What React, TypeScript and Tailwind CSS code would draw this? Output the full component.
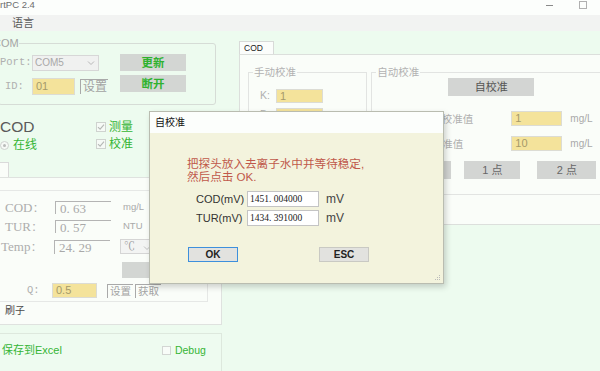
import React from "react";

const CJK = "font-['Liberation_Sans','Noto_Sans_CJK_SC',sans-serif]";
const SERIF = "font-['Liberation_Serif','Noto_Serif_CJK_SC','Noto_Sans_CJK_SC',serif]";
const MONO = "font-['Liberation_Mono',monospace]";

function Check({ label }: { label: string }) {
  return (
    <div className="flex h-[17px] items-center">
      <div className="flex h-[10px] w-[10px] items-center justify-center border border-[#cfd3cf] bg-[#f6faf6]">
        <svg width="8" height="8" viewBox="0 0 8 8">
          <path d="M1 4.2 L3.1 6.2 L7 1.6" fill="none" stroke="#b5b8b5" strokeWidth="1.1" />
        </svg>
      </div>
      <span className="ml-[3px] text-[12px] leading-[14px] text-[#35b535]">{label}</span>
    </div>
  );
}

function SunkenInput({ value, w }: { value: string; w: string }) {
  return (
    <div className={`flex h-[13px] items-center border-l border-t border-[#b4b4b4] pl-[4px] ${w}`}>
      <span className={`${SERIF} text-[13px] leading-[13px] text-[#a9a9a9]`}>{value}</span>
    </div>
  );
}

function Yellow({ value, w, h }: { value: string; w: string; h: string }) {
  return (
    <div className={`flex items-center border border-[#dcdcd4] bg-[#f4e39b] pl-[3px] ${w} ${h}`}>
      <span className="text-[11px] leading-[11px] text-[#a59a6a]">{value}</span>
    </div>
  );
}

function EdgeLabel({ text, w }: { text: string; w: string }) {
  return (
    <div className={`flex h-[14px] shrink-0 items-center whitespace-nowrap border-l border-t border-[#a9a9a9] pl-[2px] ${w}`}>
      <span className="text-[10.5px] leading-[11px] text-[#a3a3a3]">{text}</span>
    </div>
  );
}

export default function App() {
  return (
    <div className={`relative h-[371px] w-[600px] overflow-hidden bg-[#edfbef] ${CJK}`}>
      {/* title bar */}
      <div className="relative flex h-[15px] items-start bg-[#fcfefc]">
        <span className="-mt-px text-[9.5px] leading-[11px] text-[#6d6d6d]">rtPC 2.4</span>
        <div className="absolute left-[546px] top-[5px] h-px w-[7px] bg-[#8a8a8a]" />
        <div className="absolute left-[579px] top-px h-[8px] w-[8px] border border-[#b0b0b0]" />
      </div>
      {/* menu bar */}
      <div className="flex h-[16px] items-center bg-[#f2f3f2] pl-[12px]">
        <span className="text-[11px] leading-[12px] text-[#5a5a5a]">语言</span>
      </div>

      <div className="flex">
        {/* left column */}
        <div className="flex w-[222px] flex-col">
          {/* COM group */}
          <div className="relative -ml-[2px] mt-[12px] h-[62px] w-[218px] rounded-[3px] border border-[#d6dcd6]">
            <span className="absolute -top-[7px] left-[-6px] bg-[#edfbef] text-[11px] leading-[12px] text-[#a5a5a5]">COM</span>
            <div className="ml-[1px] mt-[10px] flex">
              <div className="flex w-[108px] flex-col">
                <div className="flex h-[17px] items-center">
                  <span className={`${MONO} w-[32px] text-[10.5px] text-[#b0b0b0]`}>Port:</span>
                  <div className="relative flex h-[16px] w-[67px] items-center border border-[#d7d7d7] bg-[#f0f1f0] pl-[2px]">
                    <span className="text-[10px] leading-[10px] text-[#a8a8a8]">COM5</span>
                    <svg className="absolute right-[3px] top-[4px]" width="8" height="6" viewBox="0 0 8 6">
                      <path d="M1 1.5 L4 4.5 L7 1.5" fill="none" stroke="#b8b8b8" strokeWidth="1" />
                    </svg>
                  </div>
                </div>
                <div className="mt-[7px] flex h-[17px] items-center">
                  <span className={`${MONO} w-[32px] pl-[5px] text-[10.5px] text-[#b0b0b0]`}>ID:</span>
                  <Yellow value="01" w="w-[43px]" h="h-[17px]" />
                  <div className="ml-[5px] flex h-[15px] w-[28px] items-center whitespace-nowrap border-l border-t border-[#a9a9a9] pl-[2px]">
                    <span className="text-[12px] leading-[12px] text-[#a3a3a3]">设置</span>
                  </div>
                </div>
              </div>
              <div className="ml-[12px] flex flex-col gap-[4px]">
                <div className="flex h-[17px] w-[66px] items-center justify-center bg-[#d3d6d3]">
                  <span className="text-[11.5px] font-bold leading-[12px] text-[#2fb22f]">更新</span>
                </div>
                <div className="flex h-[17px] w-[66px] items-center justify-center bg-[#d3d6d3]">
                  <span className="text-[11.5px] font-bold leading-[12px] text-[#2fb22f]">断开</span>
                </div>
              </div>
            </div>
          </div>

          {/* COD status area */}
          <div className="flex h-[55px] pt-[13px]">
            <div className="flex w-[96px] flex-col">
              <span className="text-[15.5px] leading-[18px] text-[#5a5a5a]">COD</span>
              <div className="mt-[2px] flex h-[14px] items-center">
                <div className="flex h-[9px] w-[9px] items-center justify-center rounded-full border border-[#cfd3cf] bg-[#f6faf6]">
                  <div className="h-[3px] w-[3px] rounded-full bg-[#b9bcb9]" />
                </div>
                <span className="ml-[4px] text-[12px] leading-[14px] text-[#35b535]">在线</span>
              </div>
            </div>
            <div className="flex flex-col">
              <Check label="测量" />
              <Check label="校准" />
            </div>
          </div>

          {/* tab strip */}
          <div className="flex h-[17px] items-end">
            <div className="h-[15px] w-[9px] border-r border-t border-[#dadada] bg-[#fafdf9]" />
          </div>

          {/* data panel */}
          <div className="flex h-[148px] w-[222px] flex-col border-b border-r border-t border-[#dfe2df] bg-[#fafdf9]">
            <div className="mt-[12px] flex h-[112px] w-[208px] flex-col border-b border-r border-t border-[#e6e8e6]">
              <div className="mt-[10px] flex h-[13px] items-center">
                <span className={`${SERIF} w-[55px] pl-[5px] text-[13px] text-[#adadad]`}>COD：</span>
                <SunkenInput value="0. 63" w="w-[56px]" />
                <span className="ml-[12px] text-[9.5px] text-[#a9a9a9]">mg/L</span>
              </div>
              <div className="mt-[6px] flex h-[13px] items-center">
                <span className={`${SERIF} w-[55px] pl-[5px] text-[13px] text-[#adadad]`}>TUR：</span>
                <SunkenInput value="0. 57" w="w-[56px]" />
                <span className="ml-[12px] text-[9.5px] text-[#a9a9a9]">NTU</span>
              </div>
              <div className="mt-[6px] flex h-[15px] items-center">
                <span className={`${SERIF} w-[54px] pl-[1px] text-[13px] text-[#adadad]`}>Temp：</span>
                <div className="flex h-[14px] w-[56px] items-center border-l border-t border-[#b4b4b4] pl-[4px]">
                  <span className={`${SERIF} text-[13px] leading-[13px] text-[#a9a9a9]`}>24. 29</span>
                </div>
                <div className="relative ml-[10px] flex h-[15px] w-[40px] items-center border border-[#d5d5d5] bg-[#f3f4f3] pl-[3px]">
                  <span className={`${SERIF} text-[11px] leading-[11px] text-[#9a9a9a]`}>℃</span>
                  <svg className="absolute left-[22px] top-[5px]" width="8" height="6" viewBox="0 0 8 6">
                    <path d="M1 1.5 L4 4.5 L7 1.5" fill="none" stroke="#c0c0c0" strokeWidth="1" />
                  </svg>
                </div>
              </div>
              <div className="ml-[122px] mt-[8px] h-[16px] w-[80px] bg-[#d3d6d3]" />
              <div className="mt-[5px] flex h-[15px] items-center">
                <span className={`${MONO} w-[52px] shrink-0 pl-[27px] text-[10.5px] text-[#b0b0b0]`}>Q:</span>
                <Yellow value="0.5" w="w-[45px] shrink-0" h="h-[15px]" />
                <div className="ml-[10px]">
                  <EdgeLabel text="设置" w="w-[26px]" />
                </div>
                <div className="ml-[2px]">
                  <EdgeLabel text="获取" w="w-[26px]" />
                </div>
              </div>
            </div>
            <span className="mt-[3px] pl-[5px] text-[10px] leading-[12px] text-[#4a4a4a]">刷子</span>
          </div>

          {/* bottom box */}
          <div className="mt-[8px] flex h-[60px] w-[222px] items-start border-r border-t border-[#dde8dd] bg-[#eefbf0] pt-[10px]">
            <span className="ml-[2px] text-[11px] leading-[12px] text-[#35b535]">保存到Excel</span>
            <div className="ml-[100px] flex items-center">
              <div className="h-[9px] w-[9px] border border-[#d3d6d3] bg-[#f8fcf8]" />
              <span className="ml-[4px] text-[10.5px] leading-[12px] text-[#35b535]">Debug</span>
            </div>
          </div>
        </div>

        {/* right column */}
        <div className="ml-[17px] flex flex-col">
          <div className="mt-[10px] flex h-[14px] w-[35px] items-center border-l border-r border-t border-[#d8dad8] bg-[#fbfdfb] pl-[4px]">
            <span className="text-[8.5px] leading-[9px] text-[#222]">COD</span>
          </div>
          <div className="-mt-px flex h-[171px] w-[370px] border border-[#dcdfdc] bg-[#fafdf9] pt-[17px]">
            {/* manual calibration */}
            <div className="relative ml-[8px] h-[123px] w-[121px] border border-[#e2e4e2]">
              <span className="absolute -top-[7px] left-[4px] bg-[#fafdf9] px-[1px] text-[10.5px] leading-[12px] text-[#b2b2b2]">手动校准</span>
              <div className="mt-[16px] flex h-[14px] items-center">
                <span className="w-[27px] pl-[11px] text-[10.5px] text-[#b0b0b0]">K:</span>
                <Yellow value="1" w="w-[47px]" h="h-[14px]" />
              </div>
              <div className="mt-[5px] flex h-[14px] items-center">
                <span className="w-[27px] pl-[11px] text-[10.5px] text-[#b0b0b0]">B:</span>
                <Yellow value="0" w="w-[47px]" h="h-[14px]" />
              </div>
            </div>
            {/* auto calibration */}
            <div className="relative ml-[4px] flex h-[123px] w-[240px] flex-col border border-[#e2e4e2]">
              <span className="absolute -top-[7px] left-[4px] bg-[#fafdf9] px-[1px] text-[10.5px] leading-[12px] text-[#b2b2b2]">自动校准</span>
              <div className="ml-[76px] mt-[5px] flex h-[18px] w-[86px] items-center justify-center bg-[#d3d5d3]">
                <span className="text-[11px] leading-[12px] text-[#555]">自校准</span>
              </div>
              <div className="mt-[15px] flex h-[15px] items-center">
                <span className="w-[139px] pr-[38px] text-right text-[10.5px] leading-[12px] text-[#b0b0b0]">零点校准值</span>
                <Yellow value="1" w="w-[51px]" h="h-[15px]" />
                <span className="ml-[8px] text-[10px] text-[#a9a9a9]">mg/L</span>
              </div>
              <div className="mt-[10px] flex h-[15px] items-center">
                <span className="w-[139px] pr-[48px] text-right text-[10.5px] leading-[12px] text-[#b0b0b0]">斜率校准值</span>
                <Yellow value="10" w="w-[51px]" h="h-[15px]" />
                <span className="ml-[8px] text-[10px] text-[#a9a9a9]">mg/L</span>
              </div>
              <div className="mt-[10px] flex">
                <div className="ml-[23px] h-[18px] w-[56px] bg-[#d3d5d3]" />
                <div className="ml-[13px] flex h-[18px] w-[56px] items-center justify-center bg-[#d3d5d3]">
                  <span className="text-[11px] leading-[12px] text-[#666]">1 点</span>
                </div>
                <div className="ml-[17px] flex h-[18px] w-[59px] items-center justify-center bg-[#d3d5d3]">
                  <span className="text-[11px] leading-[12px] text-[#666]">2 点</span>
                </div>
              </div>
            </div>
          </div>
        </div>
      </div>

      {/* dialog */}
      <div className="absolute left-[149px] top-[111px] flex h-[173px] w-[295px] flex-col border border-[#b9bcb0] bg-[#f3f3dd] shadow-[2px_3px_6px_rgba(0,0,0,0.18)]">
        <div className="flex h-[21px] items-center bg-[#fcfefc] pl-[5px]">
          <span className="text-[10px] leading-[12px] text-[#111]">自校准</span>
        </div>
        <div className="ml-[37px] mt-[24px] flex flex-col text-[11.6px] leading-[13px] text-[#c0584a]">
          <span>把探头放入去离子水中并等待稳定,</span>
          <span>然后点击 OK.</span>
        </div>
        <div className="mt-[8px] flex flex-col gap-[3px] pl-[46px]">
          <div className="flex h-[16px] items-center">
            <span className="w-[51px] text-[11px] leading-[12px] text-[#333]">COD(mV)</span>
            <div className="flex h-[16px] w-[72px] items-center border border-[#c4c4c4] bg-white pl-[2px]">
              <span className={`${SERIF} text-[9.5px] leading-[10px] text-[#222]`}>1451. 004000</span>
            </div>
            <span className="ml-[7px] text-[12px] leading-[12px] text-[#444]">mV</span>
          </div>
          <div className="flex h-[16px] items-center">
            <span className="w-[51px] text-[11px] leading-[12px] text-[#333]">TUR(mV)</span>
            <div className="flex h-[16px] w-[72px] items-center border border-[#c4c4c4] bg-white pl-[2px]">
              <span className={`${SERIF} text-[9.5px] leading-[10px] text-[#222]`}>1434. 391000</span>
            </div>
            <span className="ml-[7px] text-[12px] leading-[12px] text-[#444]">mV</span>
          </div>
        </div>
        <div className="mt-[21px] flex pl-[38px]">
          <div className="flex h-[15px] w-[50px] items-center justify-center border border-[#3d8fdc] bg-[#e2e2df]">
            <span className="text-[10px] font-bold leading-[10px] text-[#222]">OK</span>
          </div>
          <div className="ml-[81px] flex h-[15px] w-[50px] items-center justify-center border border-[#c9c9c3] bg-[#e2e2df]">
            <span className="text-[10px] font-bold leading-[10px] text-[#222]">ESC</span>
          </div>
        </div>
        <svg className="absolute bottom-[2px] right-[2px]" width="6" height="6" viewBox="0 0 6 6">
          <rect x="4" y="0" width="1" height="1" fill="#bbb" />
          <rect x="2" y="2" width="1" height="1" fill="#bbb" />
          <rect x="4" y="2" width="1" height="1" fill="#bbb" />
          <rect x="0" y="4" width="1" height="1" fill="#bbb" />
          <rect x="2" y="4" width="1" height="1" fill="#bbb" />
          <rect x="4" y="4" width="1" height="1" fill="#bbb" />
        </svg>
      </div>
    </div>
  );
}
